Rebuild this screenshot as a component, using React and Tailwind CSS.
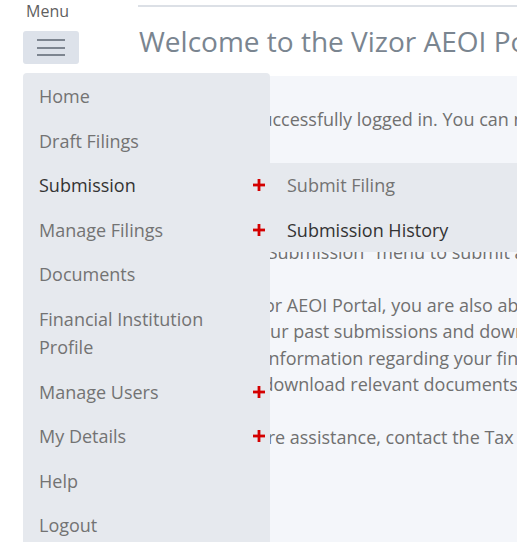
import { useState } from 'react';

const menuItems = [
  { label: 'Home' },
  { label: 'Draft Filings' },
  { label: 'Submission', sub: true, active: true },
  { label: 'Manage Filings', sub: true },
  { label: 'Documents' },
  { label: 'Financial Institution Profile' },
  { label: 'Manage Users', sub: true },
  { label: 'My Details', sub: true },
  { label: 'Help' },
  { label: 'Logout' },
];

const submissionItems = [
  { label: 'Submit Filing' },
  { label: 'Submission History', hover: true },
];

const Plus = () => (
  <svg width="12" height="12" viewBox="0 0 12 12" className="shrink-0">
    <rect x="4.6" y="0" width="2.8" height="12" fill="#d40000" />
    <rect x="0" y="4.6" width="12" height="2.8" fill="#d40000" />
  </svg>
);

const App = () => {
  const [open] = useState(true);

  return (
    <div className="relative w-[517px] h-[542px] overflow-hidden bg-white font-['Open_Sans',sans-serif]">
      <div className="flex h-full">
        {/* Left: menu toggle */}
        <div className="w-[138px] shrink-0 pl-[23px]">
          <div className="pl-[3px] pt-[1px] text-[16px] leading-5 text-[#5f5f5f]">Menu</div>
          <button className="mt-[10px] w-[56px] h-[33px] rounded-[3px] bg-[#dde2ea] flex flex-col items-center justify-center gap-[5.5px]">
            <span className="block w-[28px] h-[2px] bg-[#7d8590]" />
            <span className="block w-[28px] h-[2px] bg-[#7d8590]" />
            <span className="block w-[28px] h-[2px] bg-[#7d8590]" />
          </button>
        </div>

        {/* Right: header */}
        <div className="flex-1 min-w-0 pt-[5px]">
          <div className="h-[2px] bg-[#dce0e6]" />
          <h1 className="pl-[1px] mt-[14px] text-[28px] leading-[40px] font-normal text-[#7a8590] whitespace-nowrap">
            Welcome to the Vizor AEOI Portal
          </h1>
        </div>
      </div>

      {/* Content panel (sits under the open menu) */}
      <div className="absolute left-[138px] top-[76px] right-0 bottom-0 bg-[#f4f6fa] pl-[70px] pt-[30px] text-[18px] leading-[26.5px] text-[#707070] whitespace-nowrap">
        <p>have successfully logged in. You can now submit your filings.</p>
        <p className="mt-[26.5px]">To submit a new filing, or to check the</p>
        <p>status of the filings you have made,</p>
        <p>please select the option you need</p>
        <p>in the "Submission" menu to submit a filing.</p>
        <p className="mt-[26.5px]">the Vizor AEOI Portal, you are also able to</p>
        <p>view your past submissions and download</p>
        <p>useful information regarding your financial</p>
        <p>finally download relevant documents.</p>
        <p className="mt-[26.5px]">For more assistance, contact the Tax Authority.</p>
      </div>

      {/* Dropdown menu */}
      {open && (
        <div className="absolute left-[23px] top-[73px] w-[247px] bottom-0 rounded-t-[4px] bg-[#e6e9ee] pt-[1px]">
          {menuItems.map((item) => (
            <div
              key={item.label}
              className="relative flex items-center justify-between pl-[16px] pr-[5px] py-[8px] text-[18px] leading-[28.5px]"
            >
              <span className={item.active ? 'text-[#333333] w-[180px]' : 'text-[#737373] w-[180px]'}>
                {item.label}
              </span>
              {item.sub && <Plus />}
              {item.active && (
                <div className="absolute left-[247px] top-0 w-[260px] bg-[#e6e9ee]">
                  {submissionItems.map((s) => (
                    <div
                      key={s.label}
                      className={`pl-[17px] py-[8px] leading-[28.5px] whitespace-nowrap ${s.hover ? 'text-[#333333]' : 'text-[#737373]'}`}
                    >
                      {s.label}
                    </div>
                  ))}
                </div>
              )}
            </div>
          ))}
        </div>
      )}
    </div>
  );
};

export default App;
